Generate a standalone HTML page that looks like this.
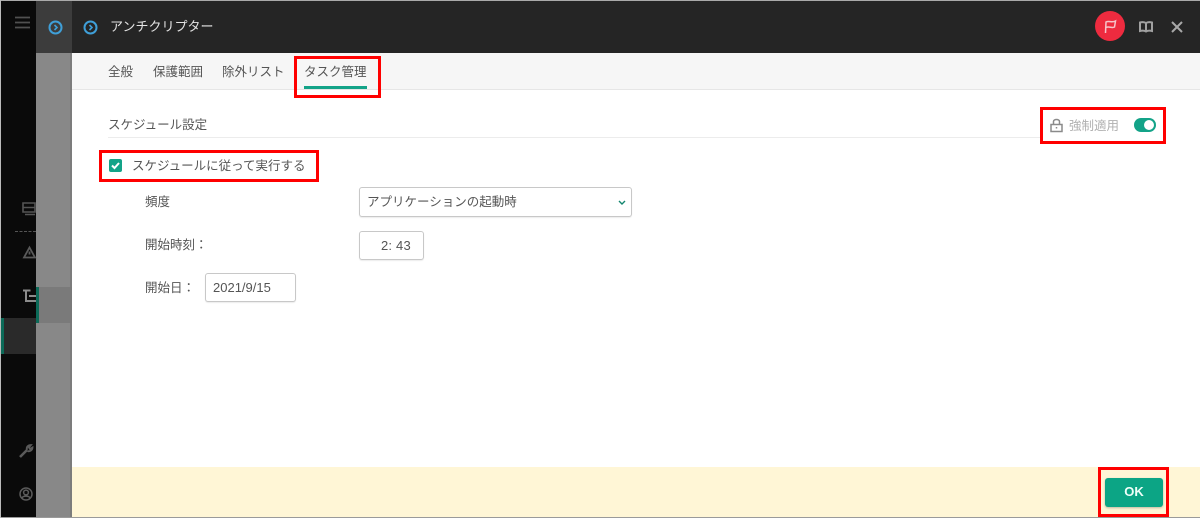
<!DOCTYPE html>
<html lang="ja"><head><meta charset="utf-8">
<style>
html,body{margin:0;padding:0;background:#fff}
body{width:1200px;height:518px;position:relative;overflow:hidden;font-family:"Liberation Sans","Noto Sans CJK JP",sans-serif;color:#555;filter:blur(.35px)}
.a{position:absolute}
.t{position:absolute;white-space:nowrap;font-size:12.5px;line-height:16px}
.red{position:absolute;border:3px solid #f00;box-sizing:border-box}
.box{position:absolute;box-sizing:border-box;background:#fff;border:1px solid #c8c8c8;border-radius:3px;box-shadow:0 1px 1px rgba(0,0,0,.08)}
svg{position:absolute;overflow:visible}
</style></head><body>
<div class="a" style="left:1px;top:1px;width:35px;height:516px;background:#0a0a0a"></div>
<div class="a" style="left:36px;top:1px;width:36px;height:516px;background:#888"></div>
<div class="a" style="left:70px;top:53px;width:2px;height:464px;background:#7c7c7c"></div>
<div class="a" style="left:36px;top:1px;width:36px;height:52px;background:#3c3c3c"></div>
<div class="a" style="left:72px;top:1px;width:1128px;height:52px;background:#252525"></div>
<div class="a" style="left:36px;top:287px;width:36px;height:36px;background:#7a7a7a"></div>
<div class="a" style="left:36px;top:287px;width:3px;height:36px;background:#0c6a58"></div>
<div class="a" style="left:1px;top:318px;width:35px;height:36px;background:#2a2a2a"></div>
<div class="a" style="left:1px;top:318px;width:3px;height:36px;background:#0c6a58"></div>
<div class="a" style="left:0;top:0;width:1200px;height:1px;background:#aaa"></div>
<div class="a" style="left:0;top:517px;width:1200px;height:1px;background:#9a9a9a"></div>
<div class="a" style="left:0;top:0;width:1px;height:518px;background:#bbb"></div>

<!-- sidebar icons -->
<svg style="left:15px;top:16px" width="16" height="13" fill="none" stroke="#505050" stroke-width="1.7"><path d="M0 1.500H15M0 6.500H15M0 11.500H15"/></svg>
<svg style="left:22px;top:202px" width="14" height="14" fill="none" stroke="#555" stroke-width="1.6"><path d="M1 1H13V10H1ZM1 5.500H13M3 12.500H13"/></svg>
<div class="a" style="left:15px;top:231px;width:21px;border-top:1px dashed #555"></div>
<svg style="left:23px;top:246px" width="13" height="13" fill="none" stroke="#5a5a5a" stroke-width="1.8"><path d="M6.500 1.500L12 11.500H1Z"/><path d="M6.500 5.500V8.500"/></svg>
<svg style="left:23px;top:289px" width="14" height="14" fill="none" stroke="#8c8c8c" stroke-width="2"><path d="M0 1.500H7.500M3 2V12H6M6 7H13M6 12H13"/></svg>
<svg style="left:19px;top:444px" width="14" height="14" fill="none" stroke="#5a5a5a" stroke-width="2.600"><path d="M1 13L8 6"/><path d="M8 6C7 3 9 1 12 1L10 3.500L11 5L13.500 3.500C13.500 6 11 8 8.500 7" stroke-width="1.800"/></svg>
<svg style="left:19px;top:487px" width="14" height="14" fill="none" stroke="#5a5a5a" stroke-width="1.500"><circle cx="7" cy="7" r="6"/><circle cx="7" cy="5.500" r="2.400"/><path d="M3 11C4 8.500 10 8.500 11 11"/></svg>

<!-- header icons -->
<svg style="left:48px;top:20px" width="15" height="15" fill="none" stroke="#3f9fd8" stroke-width="2"><circle cx="7.500" cy="7.500" r="6"/><path d="M6.500 5L9 7.500L6.500 10" stroke-width="1.600"/></svg>
<svg style="left:83px;top:20px" width="15" height="15" fill="none" stroke="#3f9fd8" stroke-width="2"><circle cx="7.500" cy="7.500" r="6"/><path d="M6.500 5L9 7.500L6.500 10" stroke-width="1.600"/></svg>
<div class="t" style="left:110px;top:19px;font-size:13px;color:#e4e4e4">アンチクリプター</div>
<div class="a" style="left:1095px;top:11px;width:30px;height:30px;border-radius:50%;background:#ee2b3f"></div>
<svg style="left:1104px;top:19px" width="13" height="15" fill="none" stroke="#f6c4ca" stroke-width="1.500"><path d="M1.500 14L2 3C5 1.500 8 4 11.500 2L10.500 8C8 9.500 5 7 2 8.500"/></svg>
<svg style="left:1139px;top:21px" width="14" height="12" fill="none" stroke="#a0a0a0" stroke-width="2"><path d="M7 2C5 1 3 1 1 1.500V10C3 9.500 5 9.500 7 10.500C9 9.500 11 9.500 13 10V1.500C11 1 9 1 7 2V10.500"/></svg>
<svg style="left:1171px;top:21px" width="12" height="12" fill="none" stroke="#a8a8a8" stroke-width="2"><path d="M1 1L11 11M11 1L1 11"/></svg>

<!-- tabs -->
<div class="a" style="left:72px;top:53px;width:1128px;height:36px;background:#f6f6f6;border-bottom:1px solid #e6e6e6"></div>
<div class="t" style="left:108px;top:64px">全般</div>
<div class="t" style="left:153px;top:64px">保護範囲</div>
<div class="t" style="left:222px;top:64px">除外リスト</div>
<div class="t" style="left:304px;top:64px">タスク管理</div>
<div class="a" style="left:304px;top:86px;width:63px;height:3px;background:#13a388"></div>
<div class="red" style="left:294px;top:56px;width:87px;height:42px"></div>

<!-- section -->
<div class="t" style="left:108px;top:117px">スケジュール設定</div>
<div class="a" style="left:108px;top:137px;width:932px;height:1px;background:#ececec"></div>
<div class="red" style="left:1040px;top:107px;width:126px;height:37px"></div>
<svg style="left:1050px;top:118px" width="13" height="15" fill="none" stroke="#8a8a8a" stroke-width="1.500"><path d="M3.500 6V3.500C3.500 0.800 9.500 0.800 9.500 3.500V6M1 6.500H12V13.500H1ZM6.500 9V10.500"/></svg>
<div class="t" style="left:1069px;top:118px;color:#b0b0b0">強制適用</div>
<div class="a" style="left:1134px;top:118px;width:22px;height:14px;border-radius:7px;background:#13a388"></div>
<div class="a" style="left:1144px;top:120px;width:10px;height:10px;border-radius:50%;background:#fff"></div>

<!-- checkbox -->
<div class="red" style="left:99px;top:150px;width:220px;height:32px"></div>
<div class="a" style="left:109px;top:159px;width:13px;height:13px;border-radius:2px;background:#13a388"></div>
<svg style="left:111px;top:162px" width="9" height="7" fill="none" stroke="#fff" stroke-width="2"><path d="M1 3.500L3.500 6L8 1"/></svg>
<div class="t" style="left:132px;top:158px">スケジュールに従って実行する</div>

<!-- form -->
<div class="t" style="left:145px;top:194px">頻度</div>
<div class="box" style="left:359px;top:187px;width:273px;height:30px"></div>
<div class="t" style="left:367px;top:194px">アプリケーションの起動時</div>
<svg style="left:618px;top:200px" width="8" height="5" fill="none" stroke="#13866f" stroke-width="1.400"><path d="M1 1L4 4L7 1"/></svg>
<div class="t" style="left:145px;top:237px">開始時刻：</div>
<div class="box" style="left:359px;top:231px;width:65px;height:29px"></div>
<div class="t" style="left:381px;top:238px;font-size:13px;letter-spacing:.2px">2: 43</div>
<div class="t" style="left:145px;top:280px">開始日：</div>
<div class="box" style="left:205px;top:273px;width:91px;height:29px"></div>
<div class="t" style="left:213px;top:280px;font-size:13px">2021/9/15</div>

<!-- footer -->
<div class="a" style="left:72px;top:467px;width:1128px;height:50px;background:#fff6d6"></div>
<div class="red" style="left:1098px;top:467px;width:71px;height:50px"></div>
<div class="a" style="left:1105px;top:478px;width:58px;height:29px;border-radius:3px;background:#0ca585;box-shadow:0 1px 2px rgba(0,0,0,.25);color:#f0fff9;font-weight:bold;font-size:13px;line-height:28px;text-align:center">OK</div>
</body></html>
